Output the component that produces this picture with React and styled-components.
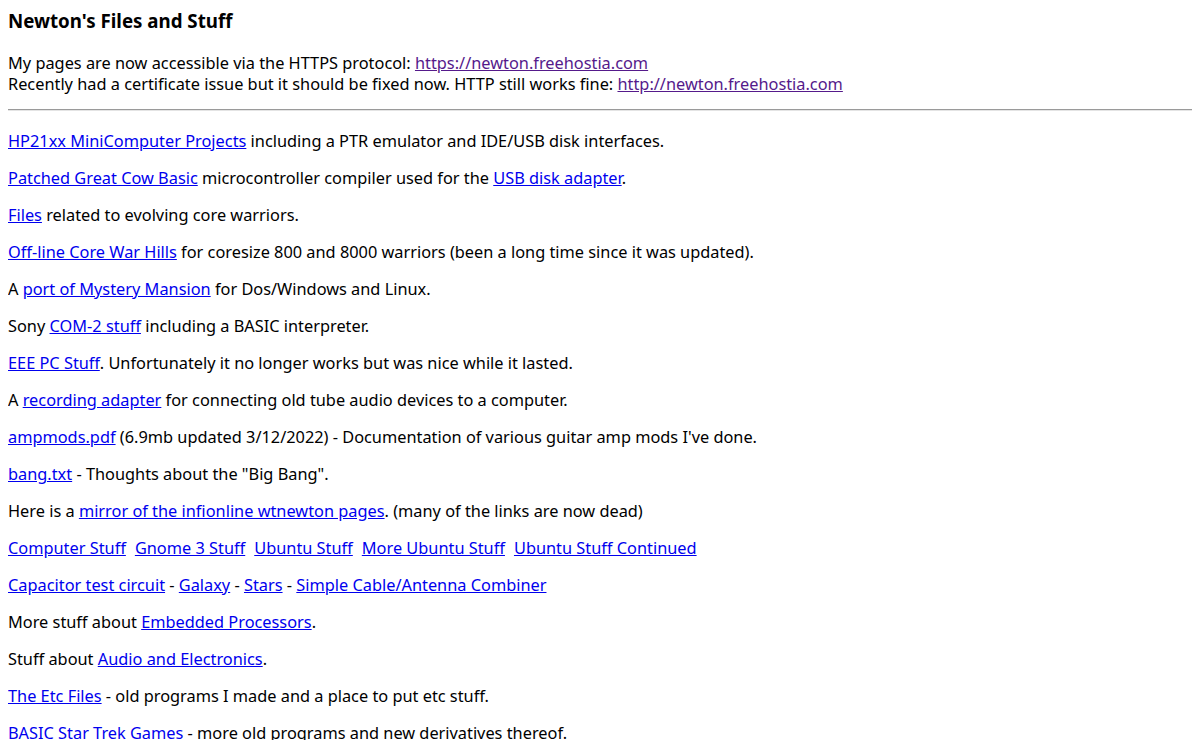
import React from "react";
import styled, { createGlobalStyle } from "styled-components";

const GlobalStyle = createGlobalStyle`
  body {
    margin: 8px;
    background: #fff;
    color: #000;
    font-family: "Noto Sans", "Open Sans", sans-serif;
    font-size: 16.33px;
  }
`;

const Title = styled.h3`
  margin: 0;
  font-size: 18.72px;
  font-weight: bold;
  line-height: 26px;
`;

const Intro = styled.p`
  margin: 19px 0 0;
  line-height: 21px;
`;

const Rule = styled.hr`
  margin: 14px 0 20px;
  border: 0;
  border-top: 1px solid #9a9a9a;
  border-bottom: 1px solid #e4e4e4;
  height: 0;
`;

const Para = styled.p`
  margin: 0 0 16px;
  line-height: 21px;
`;

const Link = styled.a`
  color: ${(p) => (p.$visited ? "#551a8b" : "#0000ee")};
  text-decoration: underline;
`;

const Gap = styled.span`
  display: inline-block;
  width: ${(p) => p.$w || 4}px;
`;

const App = () => {
  return (
    <>
      <GlobalStyle />
      <Title>Newton's Files and Stuff</Title>
      <Intro>
        My pages are now accessible via the HTTPS protocol:{" "}
        <Link $visited href="#">https://newton.freehostia.com</Link>
        <br />
        Recently had a certificate issue but it should be fixed now. HTTP still works fine:{" "}
        <Link $visited href="#">http://newton.freehostia.com</Link>
      </Intro>
      <Rule />
      <Para>
        <Link href="#">HP21xx MiniComputer Projects</Link> including a PTR emulator and IDE/USB disk interfaces.
      </Para>
      <Para>
        <Link href="#">Patched Great Cow Basic</Link> microcontroller compiler used for the{" "}
        <Link href="#">USB disk adapter</Link>.
      </Para>
      <Para>
        <Link href="#">Files</Link> related to evolving core warriors.
      </Para>
      <Para>
        <Link href="#">Off-line Core War Hills</Link> for coresize 800 and 8000 warriors (been a long time since it was updated).
      </Para>
      <Para>
        A <Link href="#">port of Mystery Mansion</Link> for Dos/Windows and Linux.
      </Para>
      <Para>
        Sony <Link href="#">COM-2 stuff</Link> including a BASIC interpreter.
      </Para>
      <Para>
        <Link href="#">EEE PC Stuff</Link>. Unfortunately it no longer works but was nice while it lasted.
      </Para>
      <Para>
        A <Link href="#">recording adapter</Link> for connecting old tube audio devices to a computer.
      </Para>
      <Para>
        <Link href="#">ampmods.pdf</Link> (6.9mb updated 3/12/2022) - Documentation of various guitar amp mods I've done.
      </Para>
      <Para>
        <Link href="#">bang.txt</Link> - Thoughts about the "Big Bang".
      </Para>
      <Para>
        Here is a <Link href="#">mirror of the infionline wtnewton pages</Link>. (many of the links are now dead)
      </Para>
      <Para>
        <Link href="#">Computer Stuff</Link><Gap $w={9} />
        <Link href="#">Gnome 3 Stuff</Link><Gap $w={9} />
        <Link href="#">Ubuntu Stuff</Link><Gap $w={9} />
        <Link href="#">More Ubuntu Stuff</Link><Gap $w={9} />
        <Link href="#">Ubuntu Stuff Continued</Link>
      </Para>
      <Para>
        <Link href="#">Capacitor test circuit</Link> - <Link href="#">Galaxy</Link> -{" "}
        <Link href="#">Stars</Link> - <Link href="#">Simple Cable/Antenna Combiner</Link>
      </Para>
      <Para>
        More stuff about <Link href="#">Embedded Processors</Link>.
      </Para>
      <Para>
        Stuff about <Link href="#">Audio and Electronics</Link>.
      </Para>
      <Para>
        <Link href="#">The Etc Files</Link> - old programs I made and a place to put etc stuff.
      </Para>
      <Para>
        <Link href="#">BASIC Star Trek Games</Link> - more old programs and new derivatives thereof.
      </Para>
    </>
  );
};

export default App;
